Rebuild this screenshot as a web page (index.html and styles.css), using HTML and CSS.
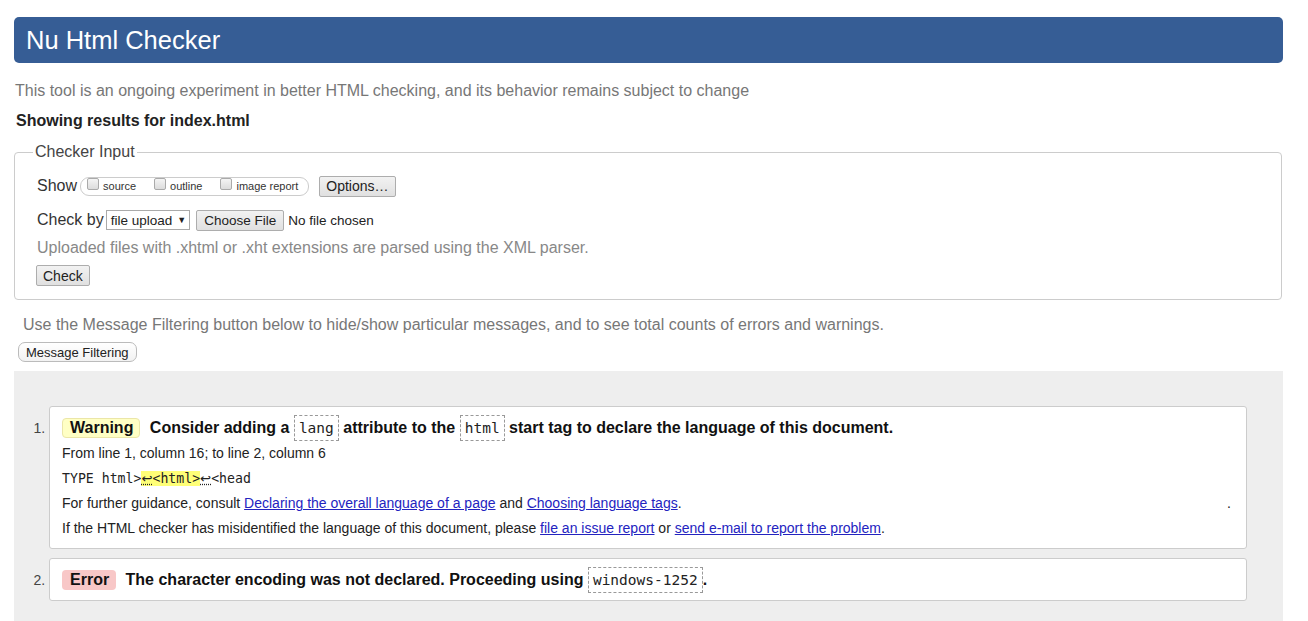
FILE: index.html
```html
<!DOCTYPE html>
<html lang="en">
<head>
<meta charset="utf-8">
<title>Nu Html Checker</title>
<link rel="stylesheet" href="styles.css">
</head>
<body>
<h1 class="banner">Nu Html Checker</h1>
<p class="intro">This tool is an ongoing experiment in better HTML checking, and its behavior remains subject to change</p>
<p class="showing">Showing results for index.html</p>
<fieldset class="input">
  <legend>Checker Input</legend>
  <div class="row show-row">
    <span class="label">Show</span>
    <span class="pill">
      <label class="opt"><input type="checkbox"> source</label>
      <label class="opt"><input type="checkbox"> outline</label>
      <label class="opt"><input type="checkbox"> image report</label>
    </span>
    <button class="btn">Options…</button>
  </div>
  <div class="row by-row">
    <span class="label">Check by</span>
    <span class="select">file upload <span class="arrow">▼</span></span>
    <button class="btn file">Choose File</button>
    <span class="nofile">No file chosen</span>
  </div>
  <p class="hint">Uploaded files with .xhtml or .xht extensions are parsed using the XML parser.</p>
  <div class="row"><button class="btn check">Check</button></div>
</fieldset>
<p class="filter-note">Use the Message Filtering button below to hide/show particular messages, and to see total counts of errors and warnings.</p>
<button class="filter-btn">Message Filtering</button>
<div class="results">
  <ol class="messages">
    <li class="msg">
      <p class="title"><span class="badge warning">Warning</span> Consider adding a <code>lang</code> attribute to the <code>html</code> start tag to declare the language of this document.</p>
      <p class="detail">From line 1, column 16; to line 2, column 6</p>
      <p class="extract">TYPE html&gt;<mark><u>↩</u>&lt;html&gt;</mark><u>↩</u>&lt;head</p>
      <p class="detail">For further guidance, consult <a href="#">Declaring the overall language of a page</a> and <a href="#">Choosing language tags</a>.<span class="dot">.</span></p>
      <p class="detail">If the HTML checker has misidentified the language of this document, please <a href="#">file an issue report</a> or <a href="#">send e-mail to report the problem</a>.</p>
    </li>
    <li class="msg">
      <p class="title"><span class="badge error">Error</span> The character encoding was not declared. Proceeding using <code>windows-1252</code>.</p>
    </li>
  </ol>
</div>
</body>
</html>
```
FILE: styles.css
```css
html, body {
  margin: 0;
  background: #fff;
}
body {
  padding: 17px 25px 0 14px;
  font-family: "Liberation Sans", Arial, sans-serif;
  font-size: 16px;
  color: #222;
}
.banner {
  margin: 0;
  height: 46px;
  line-height: 46px;
  padding-left: 12px;
  background: #365d95;
  color: #fff;
  font-size: 25.5px;
  font-weight: normal;
  border-radius: 5px;
}
.intro {
  margin: 18px 0 0 1px;
  line-height: 20px;
  color: #777;
}
.showing {
  margin: 10px 0 0 2px;
  line-height: 20px;
  font-weight: bold;
  color: #222;
}
.input {
  margin: 12px 1px 0 0;
  padding: 12px 22px 13px;
  border: 1px solid #ccc;
  border-radius: 4px;
}
.input legend {
  padding: 0 2px;
  margin-left: -4px;
  color: #444;
  font-size: 16px;
}
.row {
  display: flex;
  align-items: center;
}
.label {
  color: #333;
  font-size: 16px;
  margin-right: 3px;
}
.show-row {
  height: 26px;
}
.pill {
  display: inline-flex;
  align-items: center;
  height: 17px;
  border: 1px solid #ccc;
  border-radius: 9px;
  padding: 0 10px 0 6px;
  gap: 18px;
  margin-right: 10px;
}
.opt {
  display: inline-flex;
  align-items: center;
  font-size: 11px;
  color: #333;
  gap: 4px;
}
.opt input {
  appearance: none;
  -webkit-appearance: none;
  margin: 0;
  width: 12px;
  height: 12px;
  border: 1px solid #aaa;
  border-radius: 2px;
  background: linear-gradient(#f4f4f4, #dcdcdc);
  position: relative;
  top: -2px;
}
.btn {
  font-family: "Liberation Sans", Arial, sans-serif;
  font-size: 14px;
  color: #222;
  height: 21px;
  padding: 0 6px;
  border: 1px solid #adadad;
  border-radius: 2px;
  background: linear-gradient(#f2f2f2, #e0e0e0);
}
.by-row {
  margin-top: 10px;
  height: 22px;
}
.by-row .label {
  margin-right: 2px;
}
.select {
  display: inline-flex;
  align-items: center;
  height: 18px;
  padding: 0 3px 0 4px;
  border: 1px solid #aaa;
  font-size: 13.5px;
  color: #222;
  margin-right: 6px;
}
.arrow {
  font-size: 9px;
  margin-left: 5px;
}
.file {
  font-size: 13.5px;
  padding: 0 7px;
}
.nofile {
  font-size: 13.5px;
  color: #222;
  margin-left: 4px;
}
.hint {
  margin: 7px 0 0;
  line-height: 20px;
  color: #888;
}
.check {
  margin-top: 7px;
  margin-left: -1px;
}
.filter-note {
  margin: 16px 0 0 9px;
  line-height: 18px;
  color: #777;
}
.filter-btn {
  display: block;
  margin: 8px 0 0 4px;
  height: 20px;
  padding: 0 7px;
  font-family: "Liberation Sans", Arial, sans-serif;
  font-size: 13px;
  color: #222;
  background: linear-gradient(#fff, #f2f2f2);
  border: 1px solid #bbb;
  border-radius: 7px;
}
.results {
  margin-top: 9px;
  background: #eee;
  padding: 35px 36px 60px 35px;
}
.messages {
  margin: 0;
  padding: 0;
}
.msg {
  background: #fff;
  border: 1px solid #ccc;
  border-radius: 3px;
  padding: 8px 12px 7px;
  margin-bottom: 9px;
  font-size: 14px;
  color: #444;
}
.msg::marker {
  color: #444;
}
.msg p {
  margin: 0;
}
.title {
  font-size: 16px;
  line-height: 26px;
  font-weight: bold;
  color: #111;
}
.badge {
  display: inline-block;
  line-height: 20px;
  padding: 0 7px 0 8px;
  border-radius: 4px;
  margin-right: 5px;
}
.warning {
  background: #ffffc4;
  border: 1px solid #ebe6a8;
  line-height: 18px;
  padding: 0 6px 0 7px;
}
.error {
  background: #f8c7c7;
}
code {
  display: inline-block;
  font-family: "DejaVu Sans Mono", "Liberation Mono", monospace;
  font-size: 14.5px;
  font-weight: normal;
  line-height: 24px;
  padding: 0 4px;
  border: 1px dashed #999;
  color: #222;
  vertical-align: top;
}
.detail {
  line-height: 25px;
  color: #222;
}
.extract {
  line-height: 25px;
  font-family: "DejaVu Sans Mono", "Liberation Mono", monospace;
  font-size: 13.2px;
  color: #222;
}
.extract mark {
  background: #ffff77;
  color: #222;
}
.extract u {
  font-family: "DejaVu Sans", sans-serif;
  text-decoration: underline dotted;
}
.detail a {
  color: #2323bf;
}
.dot {
  float: right;
  margin-right: 3px;
}
```
